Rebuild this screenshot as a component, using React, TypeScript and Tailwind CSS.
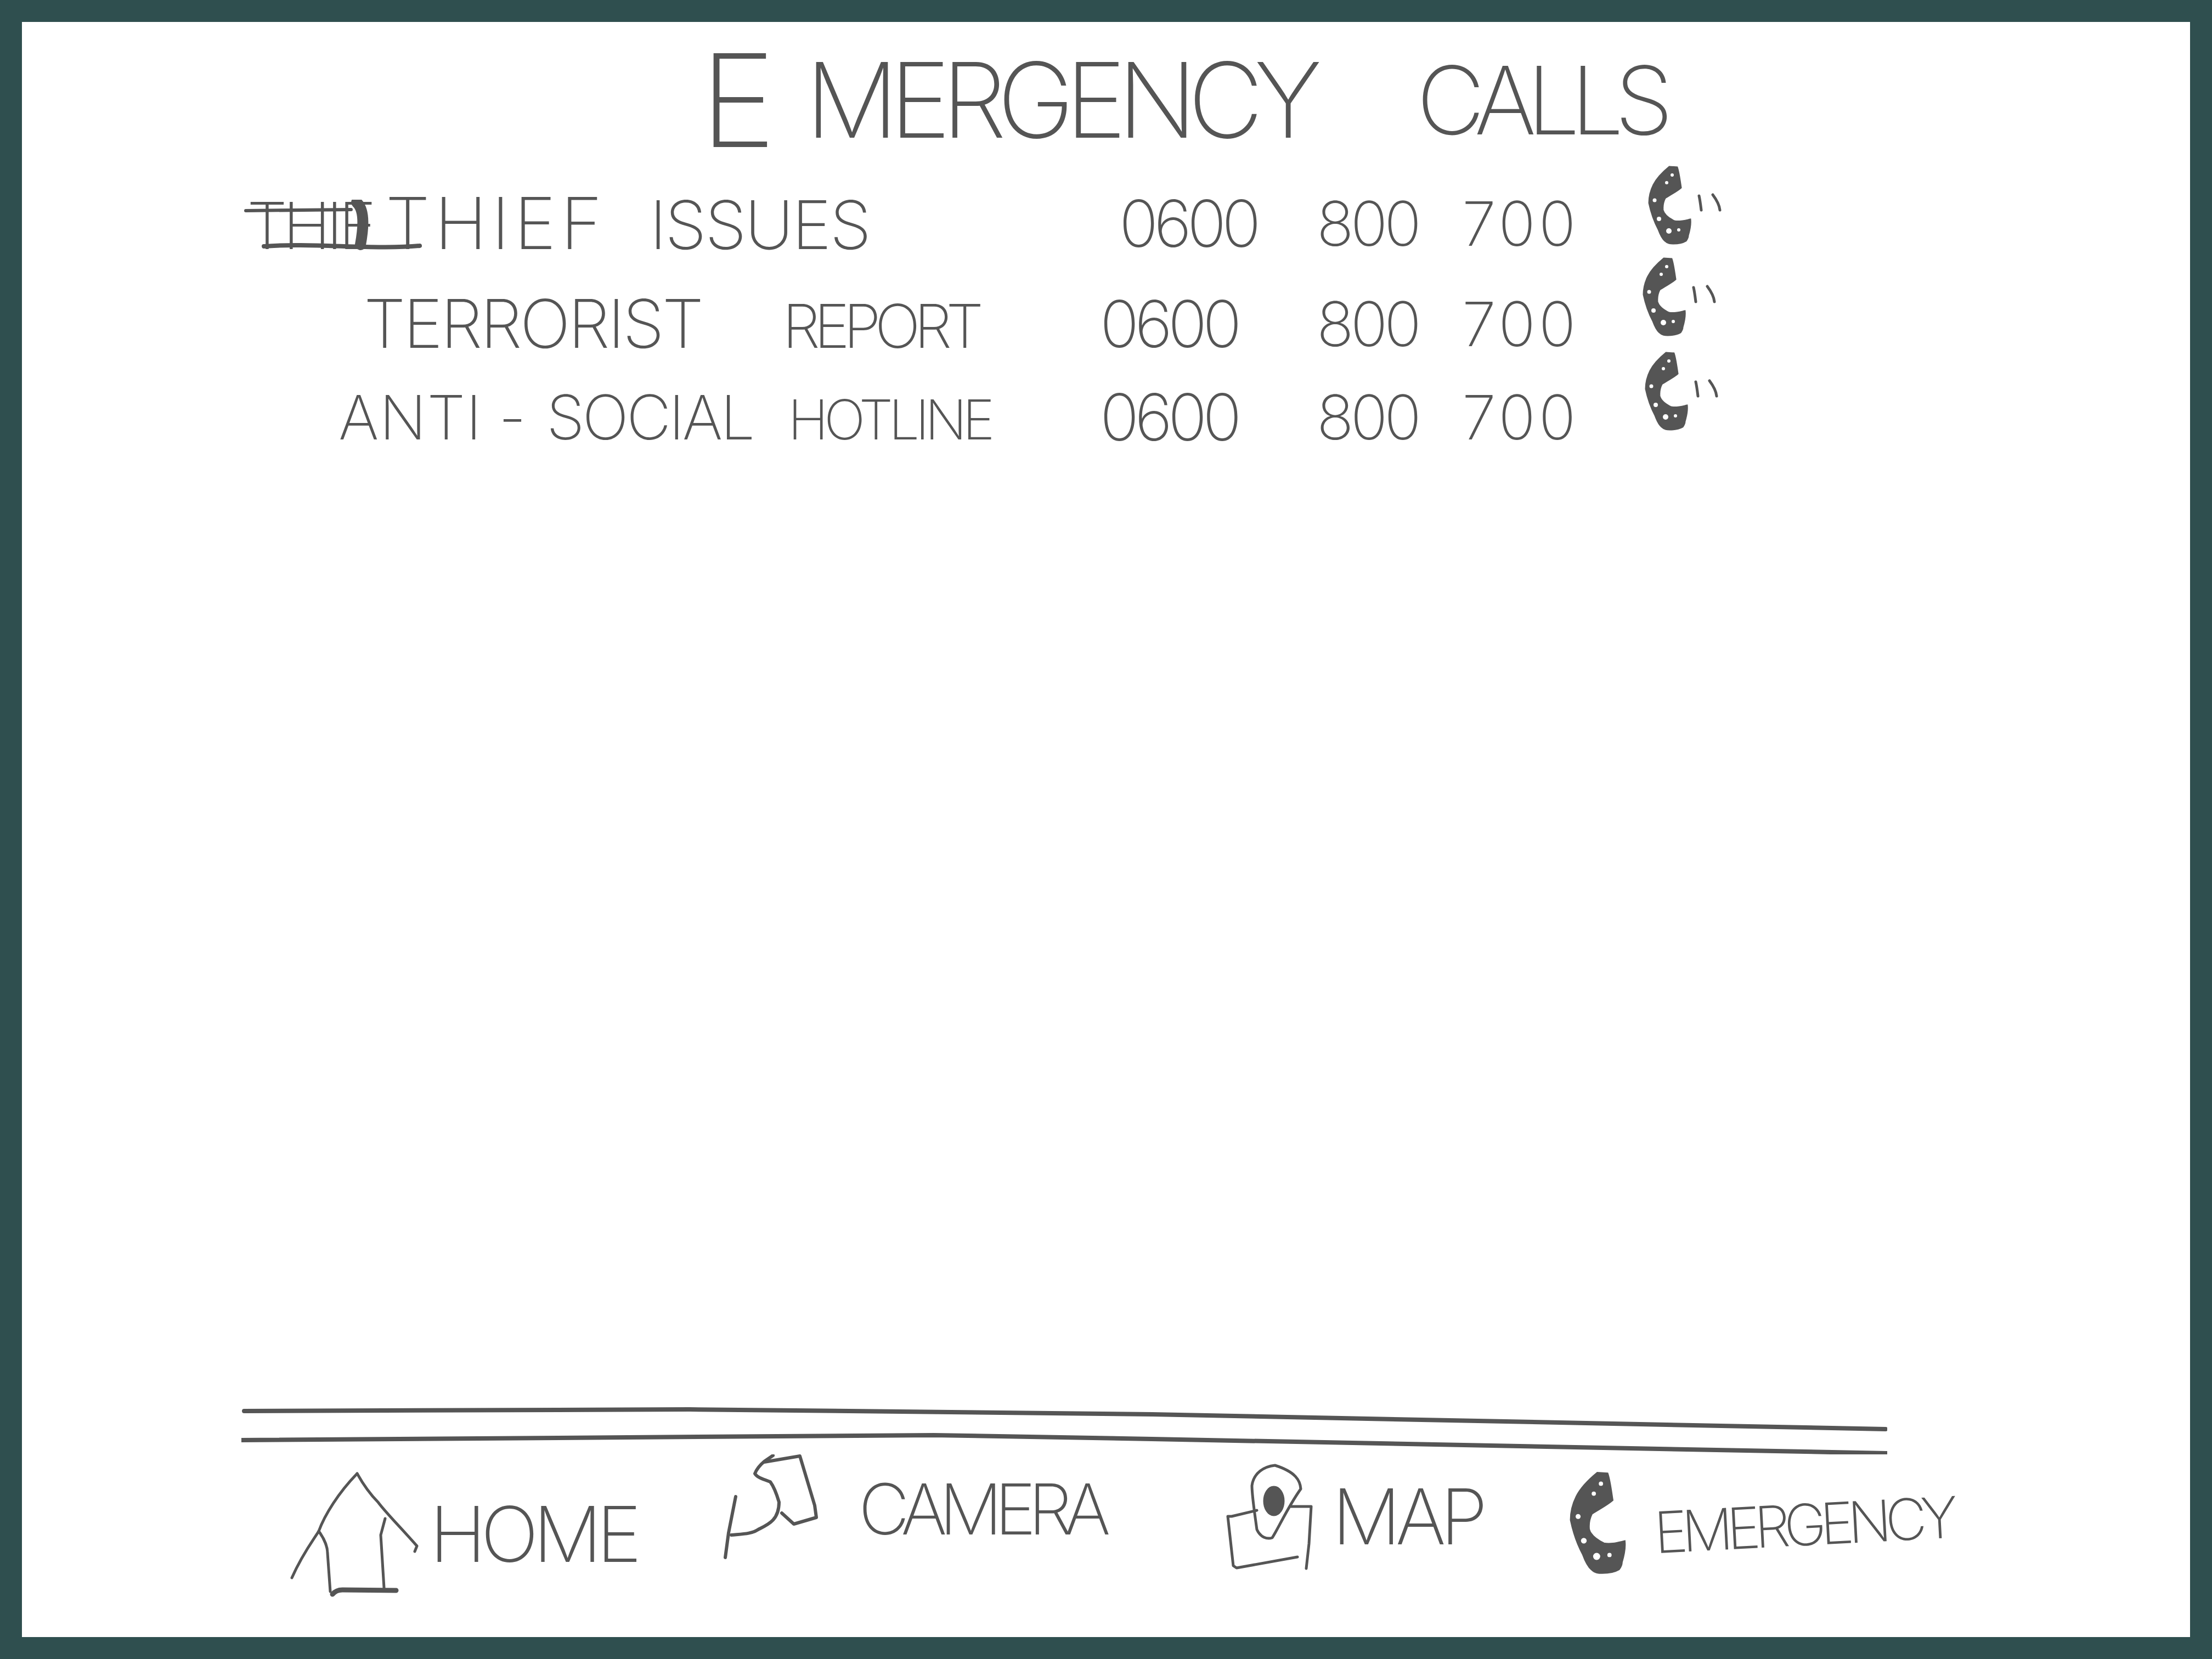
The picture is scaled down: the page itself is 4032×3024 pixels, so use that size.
const ink = '#555555';

// hand drawn handset, the speckles are the gaps left by the pen
function Handset({ className, marks = true }: { className: string; marks?: boolean }) {
  return (
    <svg viewBox="0 0 145 150" className={className} fill="none">
      <path
        d="M43 3 C32 12 20 24 14 36 C8 48 6 58 6 69 C10 88 16 104 23 117 C27 128 30 134 35 138 C40 143 45 143 50 143 C60 143 68 141 73 138 C76 134 77 131 77 128 C80 118 82 108 81 99 C72 101 62 104 52 102 C42 97 33 90 31 82 C30 72 32 66 35 60 C44 54 56 48 64 41 C62 28 60 12 57 4 Z"
        fill={ink}
        stroke={ink}
        strokeWidth="3"
      />
      <circle cx="48" cy="18" r="3" fill="#fff" />
      <circle cx="38" cy="32" r="3" fill="#fff" />
      <circle cx="16" cy="64" r="3.5" fill="#fff" />
      <circle cx="24" cy="98" r="4" fill="#fff" />
      <circle cx="42" cy="120" r="5" fill="#fff" />
      <circle cx="60" cy="118" r="3" fill="#fff" />
      {marks && (
        <>
          <path d="M97 56 C99 65 100 74 101 82" stroke={ink} strokeWidth="5" strokeLinecap="round" />
          <path d="M122 54 C128 62 134 72 135 82" stroke={ink} strokeWidth="5" strokeLinecap="round" />
        </>
      )}
    </svg>
  );
}

function HomeIcon() {
  return (
    <svg viewBox="0 0 240 230" className="w-[240px] h-[230px] shrink-0" fill="none" stroke={ink} strokeWidth="5" strokeLinecap="round" strokeLinejoin="round">
      <path d="M5 195 C25 150 45 125 54 110 C65 80 90 40 124 5" />
      <path d="M124 5 C138 30 150 45 162 57 C175 75 205 105 233 137 L229 147" />
      <path d="M54 110 C65 125 70 140 70 150 L75 220" />
      <path d="M175 87 L167 117 L173 213" />
      <path d="M79 225 C85 218 92 217 97 217 L195 218" strokeWidth="9" />
    </svg>
  );
}

function CameraIcon() {
  return (
    <svg viewBox="0 0 180 200" className="w-[180px] h-[200px] shrink-0" fill="none" stroke={ink} strokeWidth="6" strokeLinecap="round" strokeLinejoin="round">
      <path d="M7 188 L13 143 L26 77" />
      <path d="M18 147 C40 145 55 145 67 137 C85 128 105 120 105 87 C100 70 95 58 89 50 C75 45 65 42 61 35 C65 25 72 18 78 13 L94 2" />
      <path d="M78 14 L143 3 L170 93 L173 115 L132 127 L110 107" />
    </svg>
  );
}

function MapIcon() {
  return (
    <svg viewBox="0 0 170 205" className="w-[170px] h-[205px] shrink-0" fill="none" stroke={ink} strokeWidth="5" strokeLinecap="round" strokeLinejoin="round">
      <path d="M94 10 C75 12 55 23 52 47 C52 65 56 90 61 127 C68 142 80 145 89 142 C100 125 118 85 141 53 C140 38 132 22 94 10 Z" />
      <ellipse cx="92" cy="75" rx="17" ry="25" fill={ink} />
      <path d="M61 92 L15 103 L8 103 L18 193 L24 197 L135 177" />
      <path d="M123 85 L160 85 L156 153 L151 198" />
    </svg>
  );
}

function Numbers({ shift = '' }: { shift?: string }) {
  return (
    <>
      <span className={`text-[118px] tracking-[-8px] ${shift}`}>0600</span>
      <span className="text-[112px] tracking-[-6px]">800</span>
      <span className="text-[112px] tracking-[6px]">700</span>
    </>
  );
}

export default function App() {
  return (
    <div className="h-[3024px] w-full bg-[#2f4f4f] p-[40px] font-['Inter',sans-serif] font-extralight text-[#555555]">
      <div className="flex h-full w-full flex-col bg-white">
        <h1 className="ml-[1236px] flex h-[284px] items-center gap-[53px] font-extralight leading-none whitespace-nowrap">
          <span className="text-[235px]">E</span>
          <span className="text-[190px] tracking-[-17px]">MERGENCY</span>
          <span className="ml-[136px] text-[172px] tracking-[-17px]">CALLS</span>
        </h1>

        <div className="flex flex-col leading-none whitespace-nowrap">
          <div className="grid h-[166px] grid-cols-[1965px_395px_265px_335px_auto] items-center">
            <div className="relative flex items-baseline pl-[410px]">
              <span className="mr-[24px] text-[118px] tracking-[-8px]">THIE</span>
              <span className="text-[130px] tracking-[8px]">THIEF</span>
              <span className="ml-[78px] text-[122px] tracking-[-3px]">ISSUES</span>
              {/* scribbled out word */}
              <svg viewBox="0 0 330 100" className="absolute left-[405px] top-[22px] h-[100px] w-[330px]" fill="none" stroke={ink} strokeWidth="6" strokeLinecap="round">
                <path d="M3 20 L195 18" />
                <path d="M36 85 C120 78 240 92 320 84" strokeWidth="8" />
                <path d="M205 5 C222 20 216 60 212 82" strokeWidth="20" />
              </svg>
            </div>
            <Numbers shift="pl-[35px]" />
            <Handset className="mt-[-62px] h-[150px] w-[145px]" />
          </div>

          <div className="grid h-[200px] grid-cols-[1965px_395px_265px_335px_auto] items-center">
            <div className="flex items-baseline pl-[623px]">
              <span className="text-[122px] tracking-[-4px]">TERRORIST</span>
              <span className="ml-[147px] text-[110px] tracking-[-11px]">REPORT</span>
            </div>
            <Numbers />
            <Handset className="-ml-[10px] mt-[-94px] h-[150px] w-[145px]" />
          </div>

          <div className="grid h-[140px] grid-cols-[1965px_395px_265px_335px_auto] items-center">
            <div className="flex items-baseline pl-[577px]">
              <span className="text-[112px] tracking-[1px]">ANTI</span>
              <span className="ml-[30px] text-[112px]">-</span>
              <span className="ml-[37px] text-[112px] tracking-[-4px]">SOCIAL</span>
              <span className="ml-[64px] text-[100px] tracking-[-8px]">HOTLINE</span>
            </div>
            <Numbers />
            <Handset className="-ml-[6px] mt-[-90px] h-[150px] w-[145px]" />
          </div>
        </div>

        <div className="mt-auto pl-[400px]">
          <svg viewBox="0 0 3000 90" className="h-[90px] w-[3000px]" fill="none" stroke={ink} strokeWidth="8" strokeLinecap="round">
            <path d="M5 11 L817 8 L1660 17 L2997 44" />
            <path d="M0 64 L1262 55 L1660 62 L3000 88" />
          </svg>

          <nav className="grid h-[333px] grid-cols-[788px_915px_625px_auto] items-start pl-[87px] leading-none whitespace-nowrap">
            <div className="mt-[30px] flex items-center gap-[16px]">
              <HomeIcon />
              <span className="text-[140px] tracking-[-10px]">HOME</span>
            </div>
            <div className="flex items-center gap-[70px]">
              <CameraIcon />
              <span className="text-[128px] tracking-[-14px]">CAMERA</span>
            </div>
            <div className="mt-[10px] flex items-center gap-[28px]">
              <MapIcon />
              <span className="text-[140px] tracking-[-10px]">MAP</span>
            </div>
            <div className="mt-[30px] flex items-center gap-[40px]">
              <Handset className="h-[195px] w-[190px]" marks={false} />
              <span className="-ml-[70px] -rotate-3 text-[104px] tracking-[-11px]">EMERGENCY</span>
            </div>
          </nav>
        </div>
      </div>
    </div>
  );
}
